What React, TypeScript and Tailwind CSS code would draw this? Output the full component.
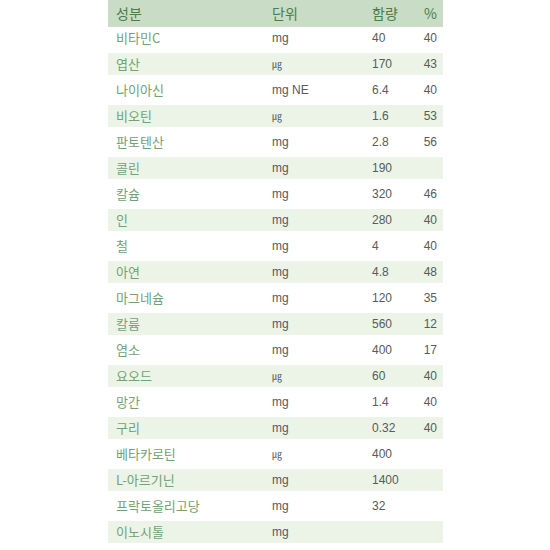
import React from 'react';

type Row = { name: string; unit: string; amount: string; pct: string };

const rows: Row[] = [
  { name: '비타민C', unit: 'mg', amount: '40', pct: '40' },
  { name: '엽산', unit: '㎍', amount: '170', pct: '43' },
  { name: '나이아신', unit: 'mg NE', amount: '6.4', pct: '40' },
  { name: '비오틴', unit: '㎍', amount: '1.6', pct: '53' },
  { name: '판토텐산', unit: 'mg', amount: '2.8', pct: '56' },
  { name: '콜린', unit: 'mg', amount: '190', pct: '' },
  { name: '칼슘', unit: 'mg', amount: '320', pct: '46' },
  { name: '인', unit: 'mg', amount: '280', pct: '40' },
  { name: '철', unit: 'mg', amount: '4', pct: '40' },
  { name: '아연', unit: 'mg', amount: '4.8', pct: '48' },
  { name: '마그네슘', unit: 'mg', amount: '120', pct: '35' },
  { name: '칼륨', unit: 'mg', amount: '560', pct: '12' },
  { name: '염소', unit: 'mg', amount: '400', pct: '17' },
  { name: '요오드', unit: '㎍', amount: '60', pct: '40' },
  { name: '망간', unit: 'mg', amount: '1.4', pct: '40' },
  { name: '구리', unit: 'mg', amount: '0.32', pct: '40' },
  { name: '베타카로틴', unit: '㎍', amount: '400', pct: '' },
  { name: 'L-아르기닌', unit: 'mg', amount: '1400', pct: '' },
  { name: '프락토올리고당', unit: 'mg', amount: '32', pct: '' },
  { name: '이노시톨', unit: 'mg', amount: '', pct: '' },
];

const kr = "font-['Noto_Sans_CJK_KR','Noto_Sans',sans-serif]";
const num = "font-['Liberation_Sans','Noto_Sans_CJK_KR',sans-serif]";

export default function App() {
  return (
    <div className="w-[550px] h-[550px] bg-white overflow-hidden">
      <div className="ml-[108px] w-[335px] flex flex-col">
        <div className={`h-[27px] bg-[#c9dcc5] flex items-center text-[14px] text-[#4a7c4c] ${kr}`}>
          <span className="w-[164px] pl-[8px]">성분</span>
          <span className="w-[100px]">단위</span>
          <span className="w-[40px]">함량</span>
          <span className="flex-1 text-right pr-[6px]">%</span>
        </div>
        <div className="flex flex-col gap-[4px]">
          {rows.map((r, i) => (
            <div
              key={r.name}
              className={`h-[22px] flex items-center ${i % 2 === 1 ? 'bg-[#ebf4e7]' : 'bg-white'}`}
            >
              <span className={`w-[164px] pl-[8px] text-[13px] text-[#72a276] ${kr}`}>{r.name}</span>
              <span className={`w-[100px] text-[12px] text-[#5a5a5a] ${num}`}>
                {r.unit === '㎍' ? <span className={`text-[10px] ${kr}`}>㎍</span> : r.unit}
              </span>
              <span className={`w-[40px] text-[12px] text-[#5a5a5a] ${num}`}>{r.amount}</span>
              <span className={`flex-1 text-right pr-[6px] text-[12px] text-[#5a5a5a] ${num}`}>{r.pct}</span>
            </div>
          ))}
        </div>
      </div>
    </div>
  );
}
